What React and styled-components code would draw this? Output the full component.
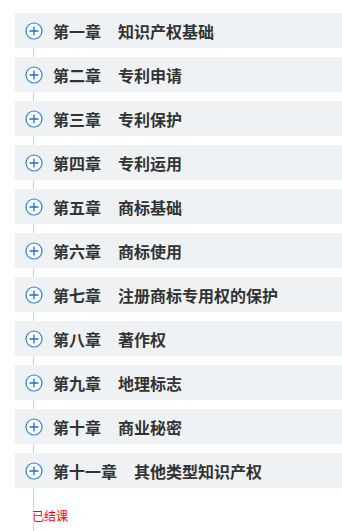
import React from "react";
import styled, { createGlobalStyle } from "styled-components";

const GlobalStyle = createGlobalStyle`
  html, body {
    margin: 0;
    padding: 0;
    background: #fff;
  }
  body {
    font-family: "Microsoft YaHei", "Noto Sans CJK SC", sans-serif;
  }
`;

const Page = styled.div`
  position: relative;
  min-height: 531px;
  padding: 13px 0 0 15px;
  box-sizing: border-box;

  &::before {
    content: "";
    position: absolute;
    left: 33px;
    top: 40px;
    bottom: 0;
    width: 1px;
    background: #cfcfcf;
  }
`;

const List = styled.ul`
  list-style: none;
  margin: 0;
  padding: 0;
  display: flex;
  flex-direction: column;
  gap: 9px;
`;

const Row = styled.li`
  position: relative;
  display: flex;
  align-items: center;
  height: 35px;
  background: #eff2f5;
  padding-left: 10px;
`;

const Toggle = styled.span`
  display: flex;
  width: 18px;
  height: 18px;
  margin-right: 10px;
  z-index: 1;
`;

const Label = styled.span`
  font-size: 16px;
  font-weight: bold;
  color: #333;
  margin-right: ${({ $gap }) => $gap || "17px"};
`;

const Title = styled.span`
  font-size: 16px;
  font-weight: bold;
  color: #333;
`;

const Status = styled.div`
  position: relative;
  width: fit-content;
  margin: 21px 0 0 17px;
  font-size: 12px;
  color: #f00;
  background: #fff;
  line-height: 14px;
`;

const PlusIcon = () => (
  <svg width="18" height="18" viewBox="0 0 18 18">
    <circle cx="9" cy="9" r="8" fill="#fff" stroke="#2b7fd4" strokeWidth="1.2" />
    <path d="M9 4.5v9M4.5 9h9" stroke="#1f6fc0" strokeWidth="1.3" />
  </svg>
);

const chapters = [
  ["第一章", "知识产权基础"],
  ["第二章", "专利申请"],
  ["第三章", "专利保护"],
  ["第四章", "专利运用"],
  ["第五章", "商标基础"],
  ["第六章", "商标使用"],
  ["第七章", "注册商标专用权的保护"],
  ["第八章", "著作权"],
  ["第九章", "地理标志"],
  ["第十章", "商业秘密"],
  ["第十一章", "其他类型知识产权"],
];

export default function App() {
  return (
    <>
      <GlobalStyle />
      <Page>
        <List>
          {chapters.map(([label, title]) => (
            <Row key={label}>
              <Toggle>
                <PlusIcon />
              </Toggle>
              <Label>{label}</Label>
              <Title>{title}</Title>
            </Row>
          ))}
        </List>
        <Status>已结课</Status>
      </Page>
    </>
  );
}
